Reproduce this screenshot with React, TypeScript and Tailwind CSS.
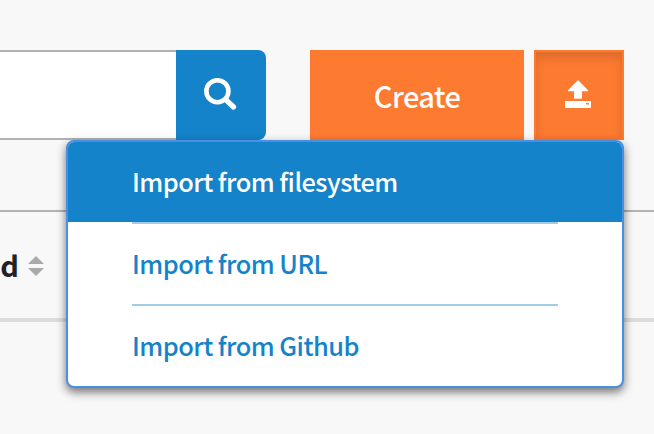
function SearchIcon() {
  return (
    <svg width="34" height="34" viewBox="0 0 34 34" fill="none" stroke="#fff">
      <circle cx="14.4" cy="14.2" r="11" strokeWidth="4.6" />
      <path d="M23 22.8 L30.5 30" strokeWidth="5.2" strokeLinecap="round" />
    </svg>
  );
}

function UploadIcon() {
  return (
    <svg width="26" height="28" viewBox="0 0 26 28" fill="#fff">
      <path d="M13 0 L23 10.3 Q23.4 11.3 22.5 11.3 H17 V17.8 Q17 18.8 16 18.8 H10 Q9 18.8 9 17.8 V11.3 H3.5 Q2.6 11.3 3 10.3 Z" />
      <path
        fillRule="evenodd"
        d="M0.7 21 H25.3 Q26 21 26 21.7 V27.3 Q26 28 25.3 28 H0.7 Q0 28 0 27.3 V21.7 Q0 21 0.7 21 Z M21 23 V24.6 H24 V23 Z"
      />
    </svg>
  );
}

function SortIcon() {
  return (
    <svg width="16" height="20" viewBox="0 0 16 20" fill="#aaa">
      <path d="M0 8 L8 0 L16 8 Z M0 12 H16 L8 20 Z" />
    </svg>
  );
}

const items = ["Import from filesystem", "Import from URL", "Import from Github"];

function ImportMenu() {
  return (
    <ul className="absolute top-[140px] left-[66px] h-[248px] w-[558px] overflow-hidden rounded-lg border-2 border-[#4a90e2] bg-white text-[25.4px] font-medium tracking-[-0.53px] text-[#1583c9] shadow-[0_4px_10px_rgba(0,0,0,0.55)]">
      {items.map((item, i) => (
        <li key={item} className={i === 0 ? "bg-[#1583c9] text-white" : ""}>
          <div
            className={
              i === 0
                ? "flex h-20 items-center px-16 pb-px"
                : "mx-16 flex h-[82px] items-center border-t-2 border-[#a1cde9] pb-px"
            }
          >
            <span className="whitespace-nowrap">{item}</span>
          </div>
        </li>
      ))}
    </ul>
  );
}

export default function App() {
  return (
    <div className="relative h-[434px] w-[654px] overflow-hidden bg-[#f8f8f8] pt-[50px] font-['Noto_Sans_CJK_SC',sans-serif]">
      <div className="flex h-[90px]">
        <div className="w-44 border-y-2 border-[#b3b3b3] bg-white" />
        <button className="flex w-[90px] items-start rounded-r-lg bg-[#1583c9] pt-[27px] pl-[27px]">
          <SearchIcon />
        </button>
        <button className="ml-11 flex w-[214px] items-center justify-center bg-[#fd7a31] pt-0.5 text-[29px] font-medium tracking-[-0.55px] text-white">
          <span>Create</span>
        </button>
        <button className="ml-2.5 flex w-[90px] items-start border-2 border-[#fd7a31] bg-[#fd7a31] pt-7 pl-[29px] shadow-[inset_0_6px_10px_rgba(0,0,0,0.125)]">
          <UploadIcon />
        </button>
      </div>
      <div className="mt-[70px] flex h-28 items-center border-t-2 border-b-4 border-t-[#b3b3b3] border-b-[#ddd]">
        <span className="w-[19px] pb-px text-right text-[29px] font-bold text-[#222]">d</span>
        <span className="mt-0.5 ml-[9px]">
          <SortIcon />
        </span>
      </div>
      <ImportMenu />
    </div>
  );
}
